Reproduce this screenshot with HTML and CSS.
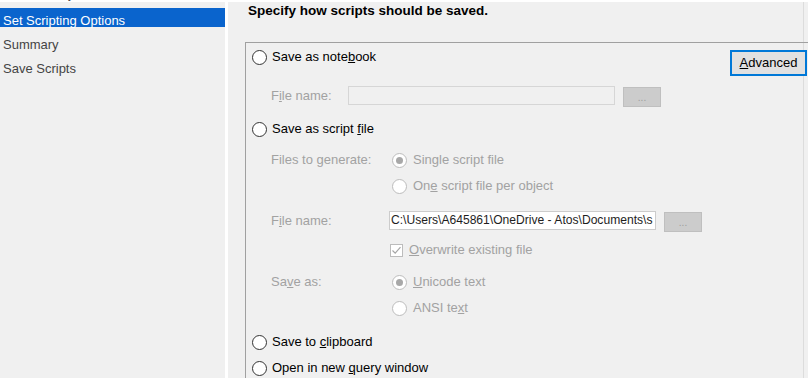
FILE: index.html
```html
<!DOCTYPE html>
<html>
<head>
<meta charset="utf-8">
<link rel="stylesheet" href="styles.css">
</head>
<body>
<div class="app">
  <aside class="sidebar">
    <div class="nav-item ghost">Choose Objects</div>
    <div class="nav-item selected">Set Scripting Options</div>
    <div class="nav-item">Summary</div>
    <div class="nav-item">Save Scripts</div>
  </aside>
  <div class="divider"></div>
  <main class="main">
    <h1 class="heading">Specify how scripts should be saved.</h1>
    <section class="group">
      <div class="row main-row mt1">
        <span class="radio"></span>
        <span class="lbl">Save as note<u>b</u>ook</span>
        <button class="btn-adv"><u>A</u>dvanced</button>
      </div>
      <div class="row sub-row mt13">
        <span class="cap dim w-b">F<u>i</u>le name:</span>
        <span class="field field-off field-b"></span>
        <span class="browse">...</span>
      </div>
      <div class="row main-row mt7">
        <span class="radio"></span>
        <span class="lbl">Save as script <u>f</u>ile</span>
      </div>
      <div class="row sub-row mt5">
        <span class="cap dim w-r">Files to generate:</span>
        <span class="radio dis checked sub"></span>
        <span class="lbl dim">Single script file</span>
      </div>
      <div class="row sub-row">
        <span class="cap w-r"></span>
        <span class="radio dis sub"></span>
        <span class="lbl dim">On<u>e</u> script file per object</span>
      </div>
      <div class="row sub-row mt9">
        <span class="cap dim w-f">F<u>i</u>le name:</span>
        <span class="field field-on">C:\Users\A645861\OneDrive - Atos\Documents\s</span>
        <span class="browse">...</span>
      </div>
      <div class="row sub-row mt3">
        <span class="cap w-c"></span>
        <span class="check">
          <svg width="11" height="11" viewBox="0 0 11 11"><path d="M1.5 5.5 L4.2 8.2 L9.5 2.2" fill="none" stroke="#a6a6a6" stroke-width="1.2"/></svg>
        </span>
        <span class="lbl dim"><u>O</u>verwrite existing file</span>
      </div>
      <div class="row sub-row mt6">
        <span class="cap dim w-r">Sa<u>v</u>e as:</span>
        <span class="radio dis checked sub"></span>
        <span class="lbl dim"><u>U</u>nicode text</span>
      </div>
      <div class="row sub-row">
        <span class="cap w-r"></span>
        <span class="radio dis sub"></span>
        <span class="lbl dim">ANSI te<u>x</u>t</span>
      </div>
      <div class="row main-row mt8">
        <span class="radio"></span>
        <span class="lbl">Save to <u>c</u>lipboard</span>
      </div>
      <div class="row main-row">
        <span class="radio"></span>
        <span class="lbl">Open in new <u>q</u>uery window</span>
      </div>
    </section>
  </main>
</div>
</body>
</html>
```

FILE: styles.css
```css
* { box-sizing: border-box; margin: 0; padding: 0; }

html, body {
  width: 808px;
  height: 378px;
  overflow: hidden;
}

body {
  background: #ffffff;
  font-family: "Liberation Sans", Arial, sans-serif;
  font-size: 13px;
  color: #000;
}

.app {
  display: flex;
  height: 378px;
  padding-top: 2px;
}

.sidebar {
  width: 225px;
  flex: none;
  background: #f0f0f0;
  color: #444444;
}

.divider {
  width: 3px;
  flex: none;
  background: #ffffff;
}

.main {
  flex: 1;
  min-width: 0;
  background: #f0f0f0;
  padding-top: 1px;
  overflow: hidden;
  box-shadow: inset -4px 0 0 #f0f0f0, inset -5px 0 0 #dcdcdc;
}

.nav-item {
  height: 19px;
  padding: 5px 0 0 3px;
  line-height: 16px;
  margin-bottom: 5px;
  white-space: nowrap;
}

.nav-item.ghost {
  margin-top: -18px;
  padding-top: 2px;
}

.nav-item.selected {
  background: #0a64cd;
  color: #ffffff;
}

.heading {
  font-size: 13.5px;
  font-weight: bold;
  line-height: 16px;
  margin-left: 20px;
}

.group {
  margin: 23px 0 0 17px;
  width: 566px;
  height: 400px;
  border: 1px solid #a0a0a0;
}

.row {
  display: flex;
  align-items: center;
  height: 26px;
}

.main-row { padding-left: 6px; }
.sub-row { padding-left: 25px; }

.mt1 { margin-top: 1px; }
.mt3 { margin-top: 3px; }
.mt5 { margin-top: 5px; }
.mt6 { margin-top: 6px; }
.mt7 { margin-top: 7px; }
.mt8 { margin-top: 8px; }
.mt9 { margin-top: 9px; }
.mt13 { margin-top: 13px; }

.lbl {
  line-height: 16px;
  white-space: nowrap;
}

.dim { color: #a2a2a2; }

.cap {
  flex: none;
  line-height: 16px;
  white-space: nowrap;
}

.w-b { width: 77px; }
.w-f { width: 118px; }
.w-r { width: 121px; }
.w-c { width: 119px; }

.radio {
  width: 15px;
  height: 15px;
  flex: none;
  border-radius: 50%;
  border: 1px solid #333333;
  background: #ffffff;
  margin-right: 5px;
  position: relative;
}

.radio.sub { margin-right: 6px; }

.radio.dis { border-color: #bcbcbc; }

.radio.checked::after {
  content: "";
  position: absolute;
  left: 3px;
  top: 3px;
  width: 7px;
  height: 7px;
  border-radius: 50%;
  background: #a8a8a8;
}

.check {
  width: 13px;
  height: 13px;
  flex: none;
  border: 1px solid #bcbcbc;
  background: #ffffff;
  margin-right: 6px;
  display: flex;
  align-items: center;
  justify-content: center;
}

.btn-adv {
  align-self: flex-start;
  margin: 6px 3px 0 auto;
  width: 77px;
  height: 26px;
  border: 2px solid #0078d7;
  background: #e1e1e1;
  font: inherit;
  color: #000;
  line-height: 20px;
  text-align: center;
}

.field {
  align-self: flex-start;
  margin-top: 3px;
  height: 19px;
  flex: none;
  width: 267px;
}

.field-off {
  background: #f0f0f0;
  border: 1px solid #d6d6d6;
}

.field-on {
  background: #ffffff;
  border: 1px solid #cccccc;
  color: #1e1e1e;
  font-size: 12.1px;
  line-height: 17px;
  padding-left: 1px;
  white-space: nowrap;
  overflow: hidden;
}

.browse {
  align-self: flex-start;
  margin: 4px 0 0 8px;
  width: 38px;
  height: 20px;
  flex: none;
  background: #cccccc;
  border: 1px solid #bfbfbf;
  color: #9e9e9e;
  font-size: 10px;
  line-height: 20px;
  text-align: center;
}
```
